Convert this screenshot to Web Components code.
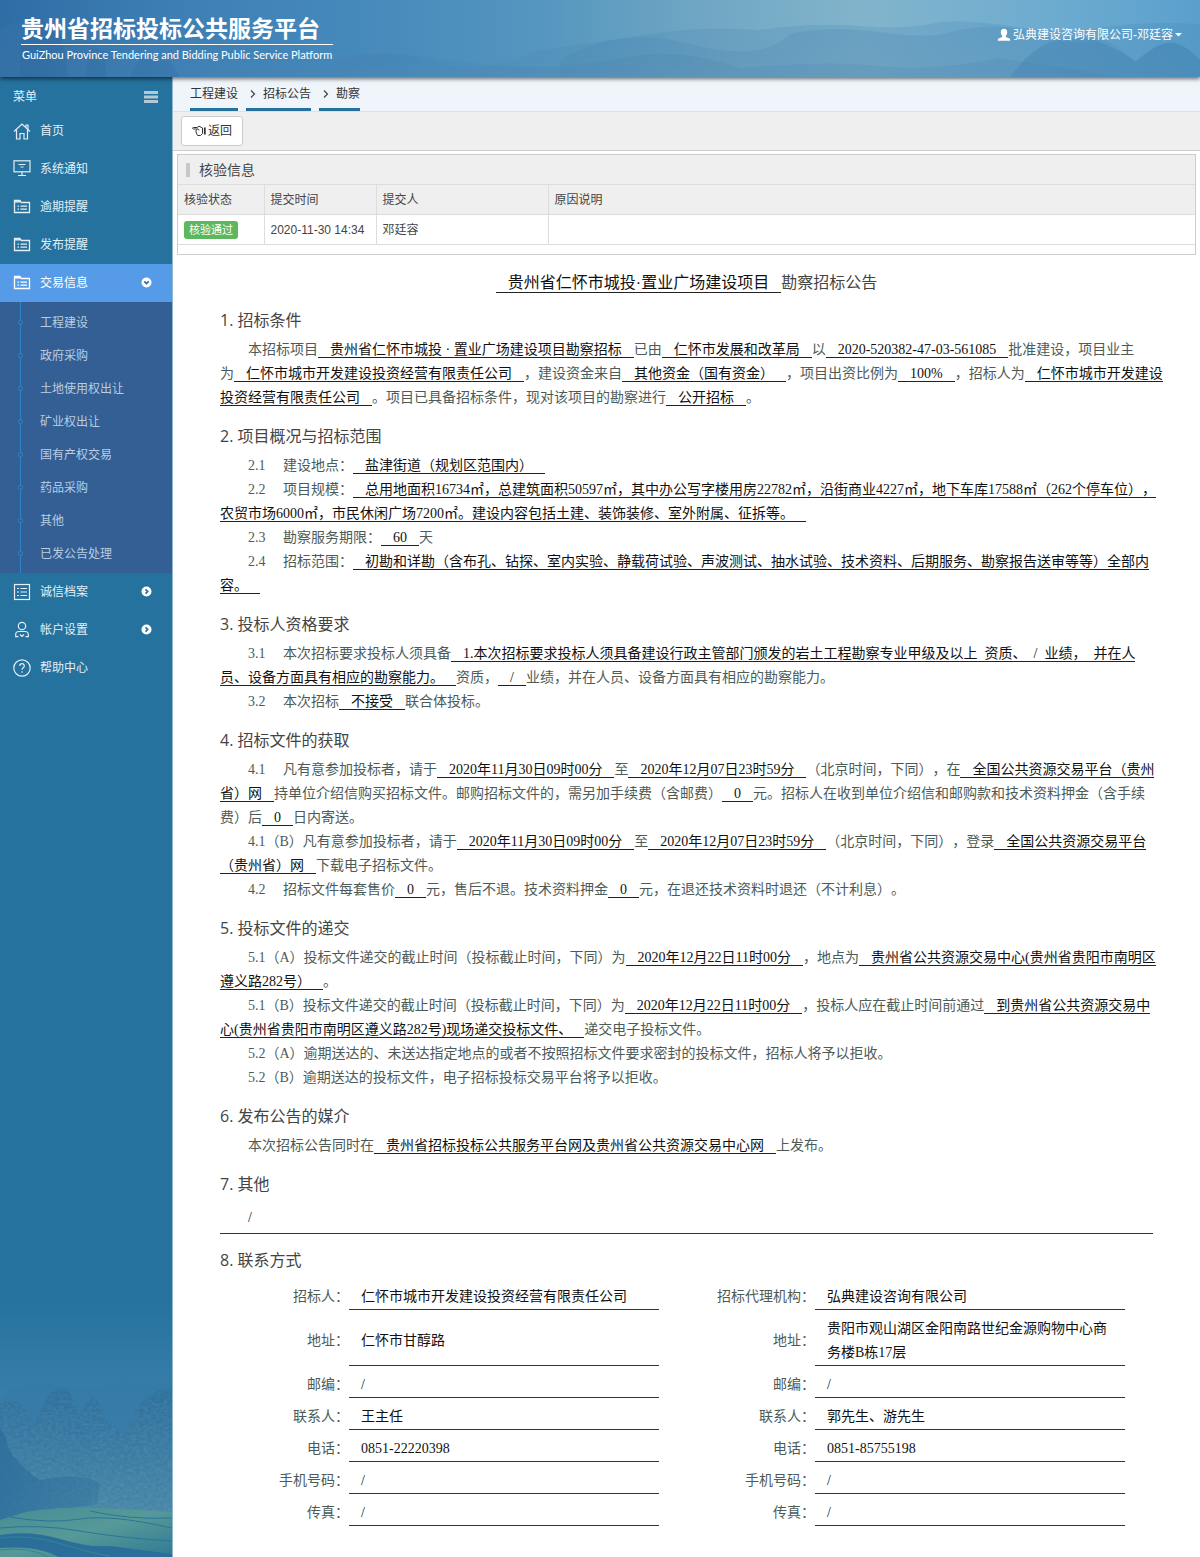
<!DOCTYPE html>
<html lang="zh-CN">
<head>
<meta charset="utf-8">
<meta name="viewport" content="width=device-width, initial-scale=1">
<title>贵州省招标投标公共服务平台</title>
<style>
  html, body { margin: 0; background: #fff; }
  body {
    font: 12px/18px "Liberation Sans", "Noto Sans CJK SC", sans-serif;
    color: #444;
    text-spacing-trim: space-all;
    --brand: #25729e;
  }
</style>
</head>
<body>
<app-shell>
  <site-header slot="header" heading="贵州省招标投标公共服务平台" sub="GuiZhou Province Tendering and Bidding Public Service Platform" user="弘典建设咨询有限公司-邓廷容"></site-header>

  <side-nav slot="nav" heading="菜单">
    <nav-item icon="home">首页</nav-item>
    <nav-item icon="screen">系统通知</nav-item>
    <nav-item icon="folder">逾期提醒</nav-item>
    <nav-item icon="folder">发布提醒</nav-item>
    <nav-item icon="folder" arrow="down" active>交易信息</nav-item>
    <sub-nav items="工程建设,政府采购,土地使用权出让,矿业权出让,国有产权交易,药品采购,其他,已发公告处理"></sub-nav>
    <nav-item icon="list" arrow="right">诚信档案</nav-item>
    <nav-item icon="user" arrow="right">帐户设置</nav-item>
    <nav-item icon="help">帮助中心</nav-item>
  </side-nav>

  <crumb-bar items="工程建设,招标公告,勘察"></crumb-bar>
  <tool-bar></tool-bar>
  <check-panel></check-panel>

  <notice-article>
    <span slot="title"><fill-in large>贵州省仁怀市城投·置业广场建设项目</fill-in>勘察招标公告</span>

    <notice-section heading="1. 招标条件">
      <notice-line>本招标项目<fill-in>贵州省仁怀市城投&nbsp;·&nbsp;置业广场建设项目勘察招标</fill-in>已由<fill-in>仁怀市发展和改革局</fill-in>以<fill-in>2020-520382-47-03-561085</fill-in>批准建设，项目业主<br>为<fill-in>仁怀市城市开发建设投资经营有限责任公司</fill-in>，建设资金来自<fill-in>其他资金（国有资金）</fill-in>，项目出资比例为<fill-in>100%</fill-in>，招标人为<fill-in>仁怀市城市开发建设<br>投资经营有限责任公司</fill-in>。项目已具备招标条件，现对该项目的勘察进行<fill-in>公开招标</fill-in>。</notice-line>
    </notice-section>

    <notice-section heading="2. 项目概况与招标范围">
      <notice-line>2.1&nbsp;　建设地点：<fill-in>盐津街道（规划区范围内）</fill-in></notice-line>
      <notice-line>2.2&nbsp;　项目规模：<fill-in>总用地面积16734㎡，总建筑面积50597㎡，其中办公写字楼用房22782㎡，沿街商业4227㎡，地下车库17588㎡（262个停车位），<br>农贸市场6000㎡，市民休闲广场7200㎡。建设内容包括土建、装饰装修、室外附属、征拆等。</fill-in></notice-line>
      <notice-line>2.3&nbsp;　勘察服务期限：<fill-in>60</fill-in>天</notice-line>
      <notice-line>2.4&nbsp;　招标范围：<fill-in>初勘和详勘（含布孔、钻探、室内实验、静载荷试验、声波测试、抽水试验、技术资料、后期服务、勘察报告送审等等）全部内<br>容。</fill-in></notice-line>
    </notice-section>

    <notice-section heading="3. 投标人资格要求">
      <notice-line>3.1&nbsp;　本次招标要求投标人须具备<fill-in>1.本次招标要求投标人须具备建设行政主管部门颁发的岩土工程勘察专业甲级及以上&nbsp; 资质、&nbsp; /&nbsp; 业绩，&nbsp; 并在人<br>员、设备方面具有相应的勘察能力。</fill-in>资质，<fill-in>/</fill-in>业绩，并在人员、设备方面具有相应的勘察能力。</notice-line>
      <notice-line>3.2&nbsp;　本次招标<fill-in>不接受</fill-in>联合体投标。</notice-line>
    </notice-section>

    <notice-section heading="4. 招标文件的获取">
      <notice-line>4.1&nbsp;　凡有意参加投标者，请于<fill-in>2020年11月30日09时00分</fill-in>至<fill-in>2020年12月07日23时59分</fill-in>（北京时间，下同），在<fill-in>全国公共资源交易平台（贵州<br>省）网</fill-in>持单位介绍信购买招标文件。邮购招标文件的，需另加手续费（含邮费）<fill-in>0</fill-in>元。招标人在收到单位介绍信和邮购款和技术资料押金（含手续<br>费）后<fill-in>0</fill-in>日内寄送。</notice-line>
      <notice-line>4.1（B）凡有意参加投标者，请于<fill-in>2020年11月30日09时00分</fill-in>至<fill-in>2020年12月07日23时59分</fill-in>（北京时间，下同），登录<fill-in>全国公共资源交易平台<br>（贵州省）网</fill-in>下载电子招标文件。</notice-line>
      <notice-line>4.2&nbsp;　招标文件每套售价<fill-in>0</fill-in>元，售后不退。技术资料押金<fill-in>0</fill-in>元，在退还技术资料时退还（不计利息）。</notice-line>
    </notice-section>

    <notice-section heading="5. 投标文件的递交">
      <notice-line>5.1（A）投标文件递交的截止时间（投标截止时间，下同）为<fill-in>2020年12月22日11时00分</fill-in>，地点为<fill-in>贵州省公共资源交易中心(贵州省贵阳市南明区<br>遵义路282号）</fill-in>。</notice-line>
      <notice-line>5.1（B）投标文件递交的截止时间（投标截止时间，下同）为<fill-in>2020年12月22日11时00分</fill-in>，投标人应在截止时间前通过<fill-in>到贵州省公共资源交易中<br>心(贵州省贵阳市南明区遵义路282号)现场递交投标文件、</fill-in>递交电子投标文件。</notice-line>
      <notice-line>5.2（A）逾期送达的、未送达指定地点的或者不按照招标文件要求密封的投标文件，招标人将予以拒收。</notice-line>
      <notice-line>5.2（B）逾期送达的投标文件，电子招标投标交易平台将予以拒收。</notice-line>
    </notice-section>

    <notice-section heading="6. 发布公告的媒介">
      <notice-line>本次招标公告同时在<fill-in>贵州省招标投标公共服务平台网及贵州省公共资源交易中心网</fill-in>上发布。</notice-line>
    </notice-section>

    <notice-section heading="7. 其他"><notice-line boxed>/</notice-line></notice-section>

    <notice-section heading="8. 联系方式"><contact-table></contact-table></notice-section>
  </notice-article>
</app-shell>

<script>
// Templates are trimmed so that inline elements gain no stray space.
const define = (name, render) => customElements.define(name, class extends HTMLElement {
  connectedCallback() {
    if (!this.shadowRoot) this.attachShadow({ mode: 'open' }).innerHTML = render(this).trim();
  }
});
const list = el => el.getAttribute('items').split(',');

const ICONS = {
  home: '<path d="M1 9.5 9 2l8 7.5"/><path d="M13 5.5V3h2v4.500"/><path d="M3.500 8v9h3.500v-5.500h4V17h3.500V8"/>',
  screen: '<rect x="1" y=".8" width="16" height="11"/><path d="M5.500 4.500h7M7.500 7h3M9 11.800V15.500M5 15.500h8"/>',
  folder: '<path stroke-width="1.300" d="M1.500 14.500V2.500H7l1.300 2h8.200v10z"/><path stroke-width="1.500" d="M1.500 3.800h6"/><path stroke-width="1.300" d="M4.500 8.200h1.500M7.500 8.200h6.500M4.500 11.200h1.500M7.500 11.200h6.500"/>',
  list: '<rect x="1.500" y="1.500" width="15" height="15"/><path d="M4 5.500h2M7.500 5.500H14M4 9h2M7.500 9H14M4 12.500h2M7.500 12.500H14"/>',
  user: '<circle cx="9" cy="5" r="3.700"/><path d="M5.500 15.700H2.700V13.500q0-3 3.300-3h6q3.300 0 3.300 3v2.200H12.500M7 13.500l2 2 2-2"/>',
  help: '<circle cx="9" cy="9" r="8.200"/><path d="M6.700 7q.2-2.300 2.300-2.300T11.300 7q0 1.200-1.300 1.900-1 .6-1 1.800M9 12.300v1.400"/>'
};
const ARROWS = {
  down: '<path d="m3.300 4.300 2.200 2.200 2.200-2.200"/>',
  right: '<path d="m4.500 3.300 2.200 2.200-2.200 2.200"/>'
};

define('app-shell', () => `
  <style>
    :host { display: flex; flex-direction: column; min-height: 100vh; }
    .body { display: flex; flex: 1; }
    ::slotted([slot=nav]) { flex: none; }
    main { flex: 1; min-width: 0; }
  </style>
  <slot name="header"></slot>
  <div class="body"><slot name="nav"></slot><main><slot></slot></main></div>`);

define('site-header', el => `
  <style>
    :host {
      display: grid; position: relative; z-index: 1; height: 77px; color: #fff;
      box-shadow: 0 2px 4px rgba(0,0,0,.55);
      background: linear-gradient(90deg, #2e6ca5, #3d7fb5 14%, #4689bb 30%, #5596bf 45%, #72a8c4 60%, #82b5cc 72%, #6dabd0 88%, #5aa0cd);
    }
    .art, .bar { grid-area: 1 / 1; min-width: 0; }
    .art { width: 100%; height: 77px; }
    .bar { display: flex; justify-content: space-between; align-items: flex-start; padding: 15px 18px 0 21px; }
    h1 { margin: 0; font-size: 23px; line-height: 29px; font-weight: 700; border-bottom: 1px solid #fff; }
    p { margin: 0; padding: 1px; font-family: Lato, "Liberation Sans", sans-serif; font-size: 11px; line-height: 18px; white-space: nowrap; }
    button { display: flex; align-items: center; gap: 2px; margin: 11px 0 0; padding: 0; border: 0; background: none; color: inherit; font: inherit; }
    button svg { display: block; }
  </style>
  <svg class="art" viewBox="0 0 1200 77" preserveAspectRatio="none" aria-hidden="true">
    <defs><linearGradient id="haze" x2="0" y2="1"><stop stop-color="#3c7eb0" stop-opacity=".2"/><stop offset="1" stop-color="#4c82ad" stop-opacity=".2"/></linearGradient></defs>
    <g fill="url(#haze)">
      <path d="M0 28Q40 10 80 24T160 35Q200 30 230 45T330 58Q380 48 430 62T540 50Q600 42 650 34T760 30Q810 22 860 26T940 22Q970 20 1010 26T1080 32Q1130 20 1200 24V77H0Z"/>
      <path d="M560 60Q620 25 690 44T790 34Q830 25 880 32T950 32Q1000 20 1040 34T1100 38Q1120 46 1136 62Q1150 48 1166 43Q1180 40 1200 60V77H560Z"/>
      <path d="M330 64Q370 50 410 55T500 66Q560 70 620 58T740 68Q830 60 880 66T1000 58L1080 70 1120 77H330Z"/>
    </g>
    <path fill="#3d7fae" opacity=".35" d="M1120 77Q1145 50 1162 44Q1180 38 1200 60V77ZM1050 42Q1080 34 1100 42Q1120 50 1136 62L1122 77H1010Q1030 50 1050 42Z"/>
    <path fill="#23598f" opacity=".15" d="M20 77V40l20-22 22 18 6 41zM85 77l5-30 14 4 3 26zM130 77l10-18 30 2 10 16z"/>
  </svg>
  <div class="bar">
    <div><h1>${el.getAttribute('heading')}</h1><p>${el.getAttribute('sub')}</p></div>
    <button type="button">
      <svg width="14" height="14" viewBox="0 0 14 14" fill="#fff"><path d="M7 .7c2.200 0 3.200 1.500 3.200 3.300 0 1.600-.6 3-1.400 3.800v1.300l3.700 1.400q.8.400.8 2.200H.7q0-1.800.8-2.200l3.700-1.400V7.800C4.400 7 3.800 5.600 3.800 4 3.800 2.200 4.800.7 7 .7Z"/></svg>
      <span>${el.getAttribute('user')}</span>
      <svg width="7" height="4" viewBox="0 0 7 4" fill="#fff"><path d="M0 0h7L3.500 3.500z"/></svg>
    </button>
  </div>`);

define('side-nav', el => `
  <style>
    :host { display: flex; flex-direction: column; justify-content: space-between; width: 172px; background: var(--brand); border-right: 1px solid #8fb8cf; color: #e3eef5; }
    header { display: flex; align-items: center; justify-content: space-between; padding: 5px 14px 0 13px; height: 30px; }
    button { display: block; padding: 0; border: 0; background: none; }
    svg { display: block; }
    .art { width: 100%; height: 260px; }
  </style>
  <nav>
    <header><span>${el.getAttribute('heading')}</span>
      <button type="button" aria-label="${el.getAttribute('heading')}"><svg width="14" height="12" viewBox="0 0 14 12" fill="#b4c9d6"><path d="M0 0h14v3H0zM0 4.500h14v3H0zM0 9h14v3H0z"/></svg></button>
    </header>
    <slot></slot>
  </nav>
  <svg class="art" viewBox="0 0 172 260" preserveAspectRatio="none" aria-hidden="true">
    <defs>
      <linearGradient id="sky" x2="0" y2="1"><stop stop-color="#25729e"/><stop offset=".45" stop-color="#3b81ab"/><stop offset="1" stop-color="#4583a4"/></linearGradient>
      <linearGradient id="hill" x2="0" y2="1"><stop stop-color="#2c709c"/><stop offset=".5" stop-color="#3b7ba3"/><stop offset="1" stop-color="#4a88a6"/></linearGradient>
      <linearGradient id="shade" x2="1"><stop stop-color="#2a6c9b"/><stop offset="1" stop-color="#2a6c9b" stop-opacity=".4"/></linearGradient>
      <linearGradient id="field" x2="1" y2="1"><stop stop-color="#458d95"/><stop offset=".5" stop-color="#579998"/><stop offset="1" stop-color="#2e7995"/></linearGradient>
      <filter id="rock" x="0" y="0" width="1" height="1"><feTurbulence type="fractalNoise" baseFrequency=".25 .35" numOctaves="3" seed="4"/><feColorMatrix values="0 0 0 0 .45  0 0 0 0 .64  0 0 0 0 .75  .9 .5 0 0 -.5"/><feComposite in2="SourceGraphic" operator="in"/></filter>
      <path id="left" d="M0 106Q14 100 24 108Q30 116 34 124Q44 98 56 92Q64 88 70 95Q78 112 86 132L120 222H0Z"/>
      <path id="mid" d="M72 140Q82 104 92 98Q100 104 106 118Q118 134 136 146L150 222H20L36 170Q60 164 72 140Z"/>
      <path id="right" d="M110 170Q124 140 132 120Q144 92 172 90V222H90Z"/>
    </defs>
    <path fill="url(#sky)" d="M0 0h172v260H0z"/>
    <path fill="#367aa6" opacity=".6" d="M0 100Q20 82 50 86T90 92Q110 82 130 84T172 84V150H0Z"/>
    <use href="#right" fill="url(#hill)"/>
    <use href="#left" fill="url(#hill)"/>
    <use href="#mid" fill="url(#hill)" opacity=".85"/>
    <g filter="url(#rock)" opacity=".22"><use href="#left"/><use href="#mid"/><use href="#right"/></g>
    <path fill="url(#shade)" opacity=".75" d="M0 130Q6 136 8 150Q18 168 40 182Q66 176 88 180L101 186Q96 196 98 206L60 212 0 222Z"/>
    <path fill="url(#field)" d="M0 222 26 214Q60 208 100 210L172 214V260H0Z"/>
    <path fill="none" stroke="#2c7598" d="M10 219Q50 226 80 221T172 230M0 230Q40 226 80 233T172 243M90 213Q130 222 172 220"/>
    <path fill="#2b6e99" d="M0 237Q30 232 60 241T110 248L172 256V260H60Q40 247 0 250Z"/>
    <path fill="none" stroke="#2f8a90" d="M0 240Q30 236 62 246T110 258M0 252Q30 248 50 260"/>
  </svg>`);

define('nav-item', el => `
  <style>
    :host { display: block; }
    :host([active]) { background: #559be8; color: #fff; }
    a { display: flex; align-items: center; gap: 9px; height: 37px; padding: 0 20px 1px 13px; color: inherit; text-decoration: none; }
    .label { flex: 1; }
    svg { display: block; }
  </style>
  <a href="#"><svg width="18" height="18" viewBox="0 0 18 18" fill="none" stroke="currentColor" stroke-width="1.200">${ICONS[el.getAttribute('icon')]}</svg>
    <span class="label"><slot></slot></span>
    ${el.hasAttribute('arrow') ? `<svg width="11" height="11" viewBox="0 0 11 11"><circle cx="5.500" cy="5.500" r="5" fill="#fff"/><g fill="none" stroke="#25729e" stroke-width="1.700">${ARROWS[el.getAttribute('arrow')]}</g></svg>` : ''}
  </a>`);

define('sub-nav', el => `
  <style>
    :host { display: block; background: #345f94; color: #b9cde2; }
    ul { list-style: none; margin: 0 0 0 20px; padding: 4px 0 3px; border-left: 1px solid #2f84c4; }
    li { display: flex; align-items: center; height: 33px; }
    li::before { content: ""; box-sizing: border-box; width: 5px; height: 5px; margin: 0 17px 0 -3px; border: 1px solid #2f84c4; border-radius: 50%; background: #345f94; }
    a { color: inherit; text-decoration: none; }
  </style>
  <ul>${list(el).map(t => `<li><a href="#">${t}</a></li>`).join('')}</ul>`);

define('crumb-bar', el => `
  <style>
    :host { display: flex; gap: 8px; padding: 0 17px; background: #eff5fa; border-bottom: 1px solid #d9e0e6; }
    a { display: flex; align-items: center; box-sizing: border-box; height: 34px; padding: 3px 0 0; border-bottom: 3px solid var(--brand); color: #333; text-decoration: none; }
    svg { display: block; margin: 0 7px 0 4px; }
  </style>
  ${list(el).map((t, i) => `<a href="#">${i ? '<svg width="6" height="8" viewBox="0 0 6 8" fill="none" stroke="#444" stroke-width="1.200"><path d="m1 .5 3.500 3.500L1 7.500"/></svg>' : ''}<span>${t}</span></a>`).join('')}`);

define('tool-bar', () => `
  <style>
    :host { display: flex; padding: 4px 8px; background: #efefef; border-bottom: 1px solid #ccc; }
    button { display: flex; align-items: center; gap: 2px; height: 30px; padding: 0 10px; border: 1px solid #ccc; border-radius: 3px; background: #fff; color: #333; font: inherit; }
    svg { display: block; }
  </style>
  <button type="button"><svg width="14" height="12" viewBox="0 0 14 12" fill="none" stroke="#333"><path d="M5.500 4H1.400Q.6 3.900.6 3.200T1.400 2.500H5.200L7 1.200 10.500 3V8.500L8.500 10.500H5.800Q4.500 10 5 8.800 3.600 8.300 4.300 7 3.200 6 4.300 5.200L5.500 4 7.300 5.200"/><path stroke-width="1.800" d="M12.800 2.500v7"/></svg><span>返回</span></button>`);

define('check-panel', () => `
  <style>
    :host { display: block; margin: 3px 4px 0; padding-bottom: 9px; border: 1px solid #ccc; }
    h2 { display: flex; align-items: center; gap: 9px; margin: 0; height: 29px; padding-left: 8px; background: #efefef; font-size: 14px; font-weight: 400; }
    h2::before { content: ""; width: 4px; height: 14px; background: #c8c8c8; }
    table { width: 100%; border-collapse: collapse; table-layout: fixed; }
    th, td { box-sizing: border-box; height: 30px; padding: 0 6px; border: 1px solid #ddd; border-left: 0; text-align: left; font-weight: 400; }
    th:last-child, td:last-child { border-right: 0; }
    th { background: #efefef; }
    .status { display: inline-block; padding: 0 5px; border-radius: 3px; background: #5cb85c; color: #fff; font-size: 11px; line-height: 18px; }
  </style>
  <h2>核验信息</h2>
  <table>
    <colgroup><col style="width:86px"><col style="width:112px"><col style="width:172px"><col></colgroup>
    <tr><th>核验状态</th><th>提交时间</th><th>提交人</th><th>原因说明</th></tr>
    <tr><td><span class="status">核验通过</span></td><td>2020-11-30 14:34</td><td>邓廷容</td><td></td></tr>
  </table>`);

define('notice-article', () => `
  <style>
    :host { display: block; padding: 17px 47px 32px; }
    h1 { margin: 0; font-size: 16px; line-height: 22px; font-weight: 400; text-align: center; }
  </style>
  <h1><slot name="title"></slot></h1><slot></slot>`);

define('notice-section', el => `
  <style>
    :host { display: block; margin-top: 14px; }
    h2 { margin: 0 0 6px; font: 400 16px/24px "Open Sans", "Noto Sans CJK SC", sans-serif; }
  </style>
  <h2>${el.getAttribute('heading')}</h2><slot></slot>`);

define('notice-line', () => `
  <style>
    :host { display: block; margin-right: -20px; text-indent: 28px; color: #4d5b58; font: 14px/24px "Liberation Serif", "Noto Sans CJK SC", serif; }
    :host([boxed]) { margin-right: 0; padding: 4px 0 3px; border-bottom: 1px solid #333; color: #111; }
  </style><slot></slot>`);

define('fill-in', () => `
  <style>
    :host { display: inline; padding: 0 12px; border-bottom: 1px solid #222; color: #111; }
    :host([large]) { padding-bottom: 1px; }
  </style><slot></slot>`);

const CONTACTS = [
  ['招标人', '仁怀市城市开发建设投资经营有限责任公司', '招标代理机构', '弘典建设咨询有限公司'],
  ['地址', '仁怀市甘醇路', '地址', '贵阳市观山湖区金阳南路世纪金源购物中心商务楼B栋17层'],
  ['邮编', '/', '邮编', '/'],
  ['联系人', '王主任', '联系人', '郭先生、游先生'],
  ['电话', '0851-22220398', '电话', '0851-85755198'],
  ['手机号码', '/', '手机号码', '/'],
  ['传真', '/', '传真', '/']
];
define('contact-table', () => `
  <style>
    :host { display: block; padding-right: 28px; font: 14px/24px "Liberation Serif", "Noto Sans CJK SC", serif; }
    table { width: 100%; border-collapse: separate; border-spacing: 0; table-layout: fixed; }
    th { padding: 7px 0 1px; text-align: right; font-weight: 400; color: #4d5b58; }
    td { padding: 7px 12px 0; border-bottom: 1px solid #333; color: #111; }
  </style>
  <table>
    <colgroup><col style="width:129px"><col><col style="width:156px"><col></colgroup>
    ${CONTACTS.map(([a, b, c, d]) => `<tr><th scope="row">${a}：</th><td>${b}</td><th scope="row">${c}：</th><td>${d}</td></tr>`).join('')}
  </table>`);
</script>
</body>
</html>
